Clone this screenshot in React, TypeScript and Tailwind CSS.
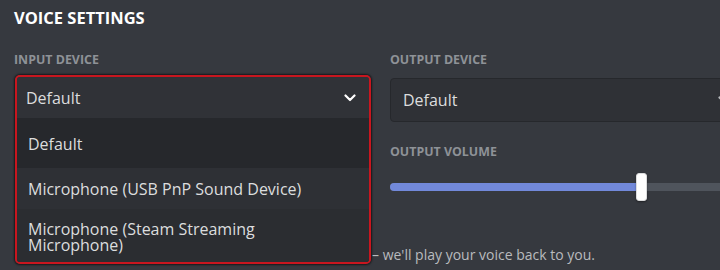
import React from "react";

const Chevron = ({ className = "" }: { className?: string }) => (
  <svg width="12" height="8" viewBox="0 0 12 8" className={className} fill="none">
    <path d="M1.5 1.5 L6 6 L10.5 1.5" stroke="currentColor" strokeWidth="2.2" strokeLinecap="round" strokeLinejoin="round" />
  </svg>
);

export default function App() {
  return (
    <div
      className="w-[720px] h-[270px] overflow-hidden bg-[#36393f] text-[#dcddde] relative"
      style={{ fontFamily: '"Open Sans", "Noto Sans", sans-serif' }}
    >
      <div className="pl-[14px] pt-[7px]">
        <h2 className="text-[16.5px] font-bold text-white leading-[22px]">VOICE SETTINGS</h2>
        <div className="flex mt-[23px]">
          {/* input column */}
          <div className="w-[357px] shrink-0">
            <div className="text-[12.4px] font-bold text-[#8e9297] leading-[16px]">INPUT DEVICE</div>
            <div className="mt-[7px] ml-[1px] w-[356px] rounded-[5px] border-2 border-[#c8161f] shadow-[0_0_2px_1px_rgba(0,0,0,0.6)] overflow-hidden">
              <div className="h-[42px] flex items-center justify-between pl-[9px] pr-[13px] bg-[#303237] border-b border-[#26282c]">
                <span className="text-[16px] text-[#dcddde]">Default</span>
                <Chevron className="text-white" />
              </div>
              <div className="bg-[#2d2f33]">
                <div className="h-[49px] flex items-center pl-[11px] bg-[#26282c] text-[16px] text-[#dcddde]">Default</div>
                <div className="h-[41px] flex items-center pl-[11px] bg-[#2e3035] text-[16px] text-[#dcddde]">
                  Microphone (USB PnP Sound Device)
                </div>
                <div className="h-[53px] flex flex-col justify-center pl-[11px] pt-[2px] bg-[#2b2d31] text-[16px] leading-[16px] text-[#dcddde]">
                  <span>Microphone (Steam Streaming</span>
                  <span>Microphone)</span>
                </div>
              </div>
            </div>
          </div>
          {/* output column */}
          <div className="ml-[19px] w-[360px] shrink-0 flex flex-col">
            <div className="text-[12.4px] font-bold text-[#8e9297] leading-[16px]">OUTPUT DEVICE</div>
            <div className="mt-[10px] h-[44px] w-[355px] rounded-[4px] border border-[#26282c] bg-[#2f3136] flex items-center justify-between pl-[12px] pr-[14px]">
              <span className="text-[16px] text-[#dcddde]">Default</span>
              <Chevron className="text-[#b9bbbe]" />
            </div>
            <div className="mt-[22px] text-[12.4px] font-bold text-[#8e9297] leading-[16px]">OUTPUT VOLUME</div>
            <div className="mt-[13px] h-[28px] relative w-[360px]">
              <div className="absolute left-0 right-0 top-[10px] h-[8px] rounded-full bg-[#4f545c]" />
              <div className="absolute left-0 w-[250px] top-[10px] h-[8px] rounded-full bg-[#7289da]" />
              <div className="absolute left-[246px] top-0 w-[11px] h-[28px] rounded-[3px] bg-white border border-[#dcddde] shadow-[0_1px_2px_rgba(0,0,0,0.4)]" />
            </div>
            <div className="mt-[45px] -ml-[18px] text-[14px] text-[#b9bbbe] leading-[18px]">
              – we'll play your voice back to you.
            </div>
          </div>
        </div>
      </div>
    </div>
  );
}
